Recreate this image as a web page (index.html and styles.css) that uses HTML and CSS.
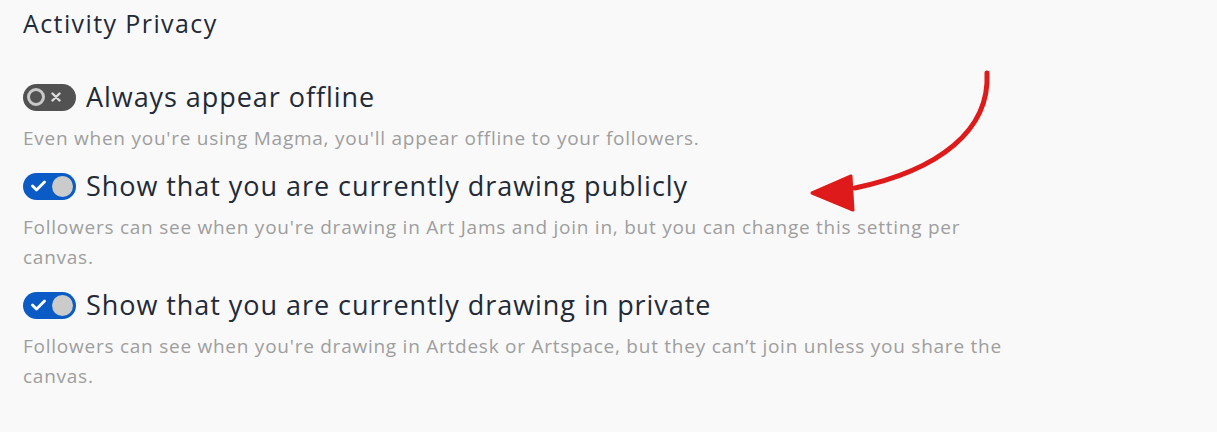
FILE: index.html
```html
<!DOCTYPE html>
<html lang="en">
<head>
  <meta charset="UTF-8" />
  <title>Activity Privacy</title>
  <link rel="stylesheet" href="styles.css">
</head>
<body>
  <div class="page">
    <h2 class="title">Activity Privacy</h2>

    <div class="setting">
      <div class="setting-head">
        <span class="toggle toggle-off">
          <span class="knob"></span>
          <svg class="mark" width="10" height="10" viewBox="0 0 10 10"><path d="M1.5 1.5 L8.5 8.5 M8.5 1.5 L1.5 8.5" stroke="#dcdcdc" stroke-width="2.4" stroke-linecap="round"/></svg>
        </span>
        Always appear offline
      </div>
      <div class="setting-desc">Even when you're using Magma, you'll appear offline to your followers.</div>
    </div>

    <div class="setting">
      <div class="setting-head">
        <span class="toggle toggle-on">
          <svg class="check" width="15" height="12" viewBox="0 0 15 12"><path d="M1.5 6 L5.5 10 L13.5 2" fill="none" stroke="#fff" stroke-width="2.8" stroke-linecap="round" stroke-linejoin="round"/></svg>
          <span class="knob"></span>
        </span>
        Show that you are currently drawing publicly
      </div>
      <div class="setting-desc">Followers can see when you're drawing in Art Jams and join in, but you can change this setting per canvas.</div>
    </div>

    <div class="setting">
      <div class="setting-head">
        <span class="toggle toggle-on">
          <svg class="check" width="15" height="12" viewBox="0 0 15 12"><path d="M1.5 6 L5.5 10 L13.5 2" fill="none" stroke="#fff" stroke-width="2.8" stroke-linecap="round" stroke-linejoin="round"/></svg>
          <span class="knob"></span>
        </span>
        Show that you are currently drawing in private
      </div>
      <div class="setting-desc">Followers can see when you're drawing in Artdesk or Artspace, but they can’t join unless you share the canvas.</div>
    </div>

    <svg class="arrow" width="200" height="160" viewBox="0 0 200 160">
      <path d="M187 13 C190 70 140 110 55 128" fill="none" stroke="#df1a1a" stroke-width="5" stroke-linecap="round"/>
      <path d="M12 133 L51 116 L53 150 Z" fill="#df1a1a" stroke="#df1a1a" stroke-width="3" stroke-linejoin="round"/>
    </svg>
  </div>
</body>
</html>
```

FILE: styles.css
```css
body {
  margin: 0;
  background-color: #f9f9f9;
  font-family: "Open Sans", sans-serif;
  color: #232a37;
}

.page {
  position: relative;
  width: 1217px;
  height: 432px;
  padding: 0 23px;
  box-sizing: border-box;
}

.title {
  margin: 0;
  padding-top: 7px;
  font-size: 25px;
  font-weight: normal;
  line-height: 32px;
  letter-spacing: 1.4px;
}

.setting {
  margin-top: 40px;
}

.setting + .setting {
  margin-top: 15px;
}

.setting-head {
  display: flex;
  align-items: center;
  gap: 10px;
  font-size: 27px;
  line-height: 36px;
  letter-spacing: 0.95px;
}

.setting-desc {
  margin-top: 8px;
  max-width: 1000px;
  font-size: 19px;
  line-height: 30px;
  letter-spacing: 0.75px;
  color: #9e9e9e;
}

.toggle {
  position: relative;
  display: flex;
  align-items: center;
  flex: none;
  width: 53px;
  height: 27px;
  border-radius: 14px;
  box-sizing: border-box;
}

.toggle-off {
  background-color: #525252;
  padding-left: 4px;
  gap: 6px;
}

.toggle-off .knob {
  width: 18px;
  height: 18px;
  border: 3px solid #c9c9c9;
  border-radius: 50%;
  box-sizing: border-box;
}

.toggle-on {
  background-color: #0b5bc6;
  justify-content: space-between;
  padding: 0 3px 0 8px;
}

.toggle-on .knob {
  width: 21px;
  height: 21px;
  border-radius: 50%;
  background-color: #cbcbcb;
}

.arrow {
  position: absolute;
  left: 800px;
  top: 60px;
}
```
